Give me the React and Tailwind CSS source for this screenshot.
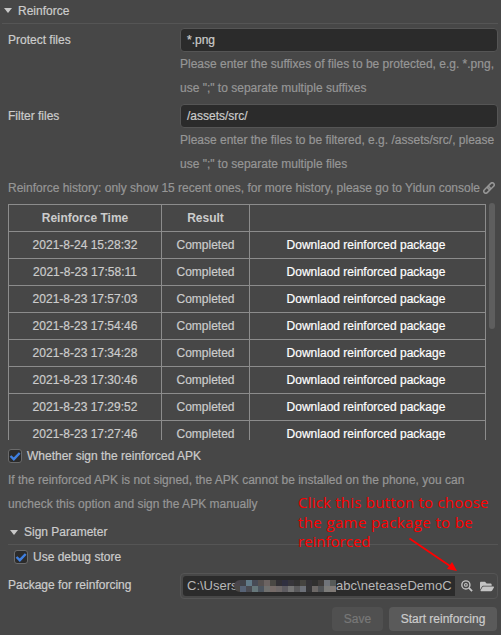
import React from 'react';
import { FaFolderOpen } from 'react-icons/fa';

const times = [
  '2021-8-24 15:28:32',
  '2021-8-23 17:58:11',
  '2021-8-23 17:57:03',
  '2021-8-23 17:54:46',
  '2021-8-23 17:34:28',
  '2021-8-23 17:30:46',
  '2021-8-23 17:29:52',
  '2021-8-23 17:27:46',
];

// Colour blocks that mask the user name inside the package path.
const maskTop = [
  'bg-[#49454b]', 'bg-[#41434a]', 'bg-[#617a88]', 'bg-[#474b56]', 'bg-[#565150]', 'bg-[#6c6462]',
  'bg-[#4a4844]', 'bg-[#323035]', 'bg-[#303040]', 'bg-[#37363b]', 'bg-[#333333]', 'bg-[#454440]',
  'bg-[#333236]', 'bg-[#30302f]', 'bg-[#3f3c3a]', 'bg-[#70747a]', 'bg-[#565a58]',
];
const maskBottom = [
  'bg-[#4a4745]', 'bg-[#566275]', 'bg-[#4a4b52]', 'bg-[#66777a]', 'bg-[#4c555f]', 'bg-[#70706e]',
  'bg-[#766b68]', 'bg-[#6e6868]', 'bg-[#5d5b60]', 'bg-[#747474]', 'bg-[#5a5a5c]', 'bg-[#6c7078]',
  'bg-[#343436]', 'bg-[#6c6866]', 'bg-[#505356]', 'bg-[#7c7c7a]', 'bg-[#807a76]',
];

function Caret() {
  return (
    <svg width="8" height="5" viewBox="0 0 8 5" className="shrink-0 fill-[#c8c8c8]">
      <path d="M0 0H8L4 5Z" />
    </svg>
  );
}

function Check() {
  return (
    <span className="flex h-3.5 w-3.5 shrink-0 items-center justify-center rounded-[3px] border border-[#6b6b6b] bg-[#2b2b2b]">
      <svg width="12" height="12" viewBox="0 0 12 12" fill="none" stroke="#3f7fe0" strokeWidth="2.4" className="shrink-0">
        <path d="M1.5 6L4.8 9.2L10.7 3" />
      </svg>
    </span>
  );
}

function Field({ label, value, lines }) {
  return (
    <div className="flex h-[76px]">
      <div className="w-[172px] shrink-0 leading-6">{label}</div>
      <div className="w-[318px] shrink-0">
        <div className="flex h-6 items-center rounded border border-[#555555] bg-[#2b2b2b] px-[6px]">{value}</div>
        <div className="whitespace-nowrap leading-6 text-[#969696]">
          {lines.map((l) => <div key={l}>{l}</div>)}
        </div>
      </div>
    </div>
  );
}

export default function App() {
  return (
    <div className="relative h-[635px] w-[501px] overflow-hidden bg-[#474747] font-['Liberation_Sans',Arial,sans-serif] text-[12px] text-[#cccccc] [-webkit-text-stroke:0.2px]">
      <div className="ml-[2px] mr-[3px] flex h-6 items-center gap-[6px] border-b border-[#555555] pl-[2px] pb-[2px]">
        <Caret />
        <span>Reinforce</span>
      </div>

      <div className="pl-2 pt-1">
        <Field
          label="Protect files"
          value="*.png"
          lines={['Please enter the suffixes of files to be protected, e.g. *.png,', 'use ";" to separate multiple suffixes']}
        />
        <Field
          label="Filter files"
          value="/assets/src/"
          lines={['Please enter the files to be filtered, e.g. /assets/src/, please', 'use ";" to separate multiple files']}
        />
      </div>

      <div className="-mt-1 flex h-6 items-center whitespace-nowrap pl-2 text-[#969696]">
        <span className="w-[472px]">Reinforce history: only show 15 recent ones, for more history, please go to Yidun console</span>
        <svg width="12" height="12" viewBox="0 0 12 12" fill="none" stroke="#969696" strokeWidth="1.5" className="mb-px ml-[3px]">
          <g transform="rotate(-45 6 6)">
            <rect x="-0.5" y="4" width="7.5" height="4" rx="2" />
            <rect x="5" y="4" width="7.5" height="4" rx="2" />
          </g>
        </svg>
      </div>

      <div className="flex h-[240px] gap-1 overflow-hidden pl-2 pt-[4px]">
        <div className="h-[236px] w-[478px] overflow-hidden">
          <table className="w-[478px] table-fixed border-collapse text-center">
            <colgroup>
              <col className="w-[153px]" />
              <col className="w-[88px]" />
              <col className="w-[236px]" />
            </colgroup>
            <tbody>
              <tr className="h-[27px] font-bold [-webkit-text-stroke:0px]">
                <td className="border border-[#8c8c8c]">Reinforce Time</td>
                <td className="border border-[#8c8c8c]">Result</td>
                <td className="border border-[#8c8c8c]" />
              </tr>
              {times.map((t) => (
                <tr key={t} className="h-[27px]">
                  <td className="border border-[#8c8c8c]">{t}</td>
                  <td className="border border-[#8c8c8c]">Completed</td>
                  <td className="border border-[#8c8c8c] pr-[3px] text-white">Downlaod reinforced package</td>
                </tr>
              ))}
            </tbody>
          </table>
        </div>
        <div className="-ml-px -mt-px h-[126px] w-[6px] rounded-full bg-[#5e5e5e]" />
      </div>

      <div className="flex h-8 items-center gap-[5px] pl-2">
        <Check />
        <span>Whether sign the reinforced APK</span>
      </div>
      <div className="-mt-1 whitespace-nowrap pl-2 leading-6 text-[#969696]">
        <div>If the reinforced APK is not signed, the APK cannot be installed on the phone, you can</div>
        <div>uncheck this option and sign the APK manually</div>
      </div>

      <div className="ml-2 mr-[3px] mt-1 flex h-[25px] items-center gap-[6px] border-b border-[#555555] pl-[2px]">
        <Caret />
        <span>Sign Parameter</span>
      </div>
      <div className="flex h-6 items-center gap-[5px] pl-[14px]">
        <Check />
        <span>Use debug store</span>
      </div>

      <div className="flex pl-2 pt-1">
        <div className="w-[172px] shrink-0 leading-6">Package for reinforcing</div>
        <div className="flex h-[26px] w-[318px] items-center rounded border border-[#555555] pl-[2px]">
          <div className="flex h-5 w-[272px] items-center whitespace-nowrap rounded-l-[3px] bg-[#2b2b2b] pl-1 text-[13px] text-[#b8b8b8] [-webkit-text-stroke:0px]">
            <span className="w-[47px] shrink-0">C:\Users</span>
            <span className="relative h-3 w-[102px] shrink-0 overflow-hidden rounded-l-full">
              <span className="flex h-1.5">{maskTop.map((c, i) => <span key={i} className={`h-1.5 w-1.5 ${c}`} />)}</span>
              <span className="flex h-1.5">{maskBottom.map((c, i) => <span key={i} className={`h-1.5 w-1.5 ${c}`} />)}</span>
            </span>
            <span className="w-[116px] shrink-0 tracking-[0.05px]">abc\neteaseDemoC</span>
          </div>
          <svg width="12" height="12" viewBox="0 0 13 13" fill="none" stroke="#c4c4c4" strokeWidth="1.5" className="ml-[6px] shrink-0">
            <circle cx="5.3" cy="5.3" r="4.4" />
            <path d="M8.6 8.6L12 12" strokeWidth="2" />
            <circle cx="5.3" cy="5.3" r="1.5" strokeWidth="1.2" />
          </svg>
          <FaFolderOpen className="ml-[7px] h-[13px] w-[14px] shrink-0 text-[#c4c4c4]" />
        </div>
      </div>

      <div className="mr-1 mt-2 flex justify-end gap-[6px]">
        <button className="h-6 w-[51px] rounded bg-[#505050] text-[#787878]">Save</button>
        <button className="h-6 w-[108px] rounded bg-[#5a5a5a]">Start reinforcing</button>
      </div>

      <div className="absolute left-[298px] top-[493px] whitespace-nowrap font-['Open_Sans','Noto_Sans',sans-serif] text-[15px] leading-[19.5px] text-[#ff0000] [-webkit-text-stroke:0px]">
        <div className="tracking-[0.22px]">Click this button to choose</div>
        <div className="tracking-[0.38px]">the game package to be</div>
        <div>reinforced</div>
      </div>
      <svg width="52" height="36" viewBox="0 0 52 36" className="absolute left-[407px] top-[536px]">
        <path d="M2.5 2.5L43 30" stroke="#ff0000" strokeWidth="1.8" />
        <path d="M50 35L40 33L45 26Z" fill="#ff0000" />
      </svg>
    </div>
  );
}
